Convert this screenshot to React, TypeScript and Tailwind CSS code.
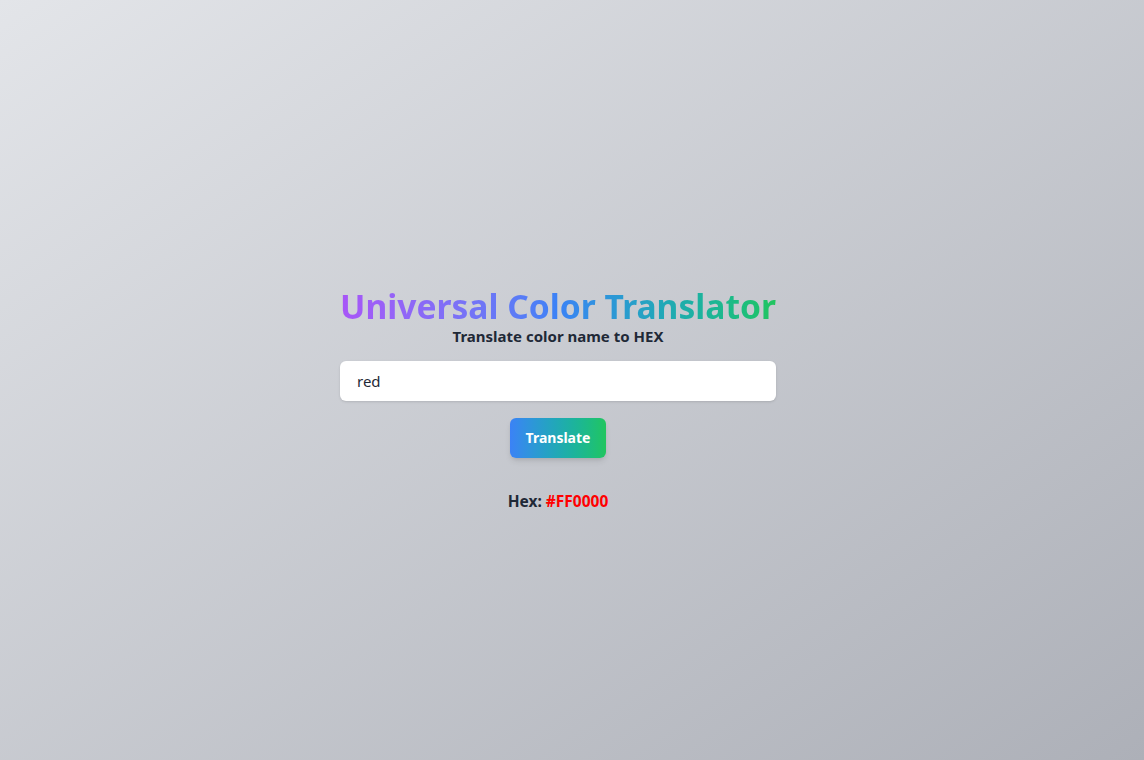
import React, { useState } from "react";

export default function App() {
  const [value, setValue] = useState("red");
  return (
    <div
      className="min-h-screen w-full bg-gradient-to-br from-[#e3e5e9] to-[#adb0b8] flex items-center justify-center pr-[28px]"
      style={{ fontFamily: '"Noto Sans", "Open Sans", sans-serif' }}
    >
      <div className="flex flex-col items-center w-[436px] pt-[38px]">
        <h1 className="text-[33.6px] leading-[36px] pt-[2px] font-bold bg-gradient-to-r from-[#a855f7] via-[#3b82f6] to-[#22c55e] bg-clip-text text-transparent whitespace-nowrap">
          Universal Color Translator
        </h1>
        <p className="mt-[2px] text-[15px] leading-[20px] font-bold text-[#1f2937]">Translate color name to HEX</p>
        <input
          value={value}
          onChange={(e) => setValue(e.target.value)}
          className="mt-[15px] w-full h-[40px] rounded-md bg-white px-[17px] text-[15px] text-[#1f2937] outline-none shadow-sm"
        />
        <button className="mt-[17px] h-[40px] w-[96px] rounded-md bg-gradient-to-r from-[#3b82f6] to-[#22c55e] text-white font-bold text-[14px] shadow-md">
          Translate
        </button>
        <p className="mt-[31px] text-[15.5px] leading-[24px] font-bold text-[#1f2937]">
          Hex: <span className="text-[#ff0000]">#FF0000</span>
        </p>
      </div>
    </div>
  );
}
